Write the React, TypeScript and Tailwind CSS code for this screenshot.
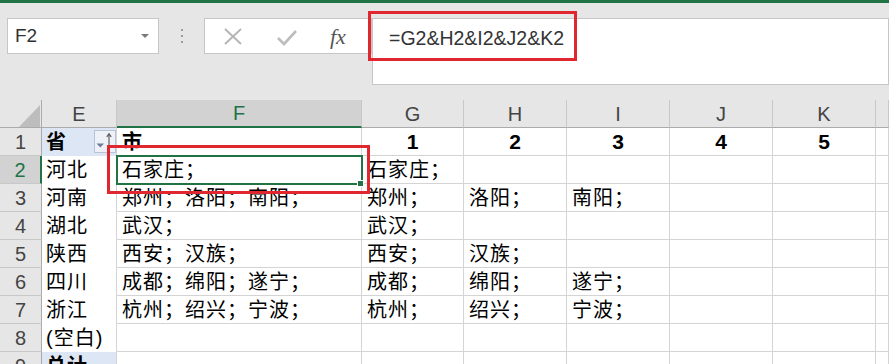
import React from 'react';

const cjk = { fontFamily: '"Liberation Sans", "Noto Sans CJK SC", sans-serif' };

const rows: string[][] = [
  ['河北', '石家庄；', '石家庄；', '', '', '', ''],
  ['河南', '郑州；洛阳；南阳；', '郑州；', '洛阳；', '南阳；', '', ''],
  ['湖北', '武汉；', '武汉；', '', '', '', ''],
  ['陕西', '西安；汉族；', '西安；', '汉族；', '', '', ''],
  ['四川', '成都；绵阳；遂宁；', '成都；', '绵阳；', '遂宁；', '', ''],
  ['浙江', '杭州；绍兴；宁波；', '杭州；', '绍兴；', '宁波；', '', ''],
  ['(空白)', '', '', '', '', '', ''],
];

function FilterButton() {
  return (
    <div className="absolute right-0 top-[2px] h-[23px] w-[22px] border border-[#b8c3d3] bg-[#eef2f8]">
      <svg width="22" height="23" viewBox="0 0 22 23" className="absolute -left-[1px] -top-[1px]">
        <path d="M2.5 13.5 L10 13.5 L6.25 17.5 Z" fill="#6b7f99" />
        <path d="M15 4 L15 19" stroke="#555" strokeWidth="1.1" />
        <path d="M12.8 6.8 L15 3.8 L17.2 6.8" stroke="#555" strokeWidth="1.1" fill="none" />
      </svg>
    </div>
  );
}

export default function App() {
  const colLetters = ['E', 'F', 'G', 'H', 'I', 'J', 'K', ''];
  return (
    <div className="relative h-[364px] w-[889px] overflow-hidden bg-[#e6e6e6]" style={cjk}>
      <div className="h-[3px] bg-[#217346]" />

      {/* formula bar */}
      <div className="flex h-[97px] items-start pt-[15px]">
        <div className="ml-[7px] flex h-[36px] w-[152px] items-center justify-between border border-[#c6c6c6] bg-white pl-[7px] pr-[9px]">
          <span className="text-[19px] text-[#333]">F2</span>
          <svg width="8" height="5" viewBox="0 0 8 5">
            <path d="M0 0 L8 0 L4 4 Z" fill="#7a7a7a" />
          </svg>
        </div>
        <div className="flex h-[36px] w-[45px] flex-col items-center justify-center gap-[4px]">
          <div className="h-[2px] w-[2px] bg-[#9a9a9a]" />
          <div className="h-[2px] w-[2px] bg-[#9a9a9a]" />
          <div className="h-[2px] w-[2px] bg-[#9a9a9a]" />
        </div>
        <div className="flex h-[36px] w-[168px] items-center border border-[#c6c6c6] bg-white">
          <svg width="18" height="17" viewBox="0 0 18 17" className="ml-[19px]">
            <path d="M1 1 L17 16 M17 1 L1 16" stroke="#b3b3b3" strokeWidth="1.8" />
          </svg>
          <svg width="20" height="16" viewBox="0 0 20 16" className="ml-[35px] mt-[4px]">
            <path d="M1 8 L7 14 L19 1" stroke="#bdbdbd" strokeWidth="2.6" fill="none" />
          </svg>
          <span className="ml-[33px] text-[22px] italic text-[#555]" style={{ fontFamily: '"Liberation Serif", serif' }}>
            fx
          </span>
        </div>
        <div className="h-[67px] flex-1 border border-[#c6c6c6] bg-white pl-[16px] pt-[5px]">
          <span className="text-[19.5px] text-[#333]">=G2&amp;H2&amp;I2&amp;J2&amp;K2</span>
        </div>
      </div>

      {/* grid */}
      <div className="relative grid grid-cols-[42px_75px_245px_102px_103px_103px_103px_103px_1fr] auto-rows-[28px] text-[20px] text-black">
        {/* header row */}
        <div className="relative border-b border-r border-[#ababab] bg-[#e6e6e6]">
          <svg width="21" height="22" viewBox="0 0 21 22" className="absolute left-[19px] top-[5px]">
            <path d="M21 0 L21 22 L0 22 Z" fill="#bdbdbd" />
          </svg>
        </div>
        {colLetters.map((c, i) => (
          <div
            key={i}
            className={
              c === 'F'
                ? 'flex items-center justify-center border-b-2 border-r border-b-[#217346] border-r-[#c8c8c8] bg-[#d2d2d2] text-[#217346]'
                : 'flex items-center justify-center border-b border-r border-b-[#ababab] border-r-[#c8c8c8] bg-[#e6e6e6] text-[#444]'
            }
          >
            {c}
          </div>
        ))}

        {/* row 1 */}
        <div className="flex items-center justify-center border-b border-r border-b-[#c8c8c8] border-r-[#ababab] bg-[#e6e6e6] text-[#444]">1</div>
        <div className="relative flex items-center border-r border-[#d4d4d4] bg-[#dce6f4] pl-[4px] font-bold">
          省
          <FilterButton />
        </div>
        <div className="flex items-center border-b border-r border-[#d4d4d4] bg-white pl-[5px] font-bold">市</div>
        {['1', '2', '3', '4', '5', ''].map((n, i) => (
          <div key={i} className="flex items-center justify-center border-b border-r border-[#d4d4d4] bg-white text-[21px] font-bold">
            {n}
          </div>
        ))}

        {/* rows 2-8 */}
        {rows.map((r, ri) => (
          <React.Fragment key={ri}>
            <div
              className={
                ri === 0
                  ? 'flex items-center justify-center border-b border-r-2 border-b-[#c8c8c8] border-r-[#217346] bg-[#d2d2d2] text-[#217346]'
                  : 'flex items-center justify-center border-b border-r border-b-[#c8c8c8] border-r-[#ababab] bg-[#e6e6e6] text-[#444]'
              }
            >
              {ri + 2}
            </div>
            <div className="flex items-center border-r border-[#d4d4d4] bg-white pl-[4px] tracking-[1px]">{r[0]}</div>
            {r.slice(1).map((t, ci) => (
              <div key={ci} className="relative flex items-center whitespace-nowrap border-b border-r border-[#d4d4d4] bg-white pl-[5px] tracking-[1px]">
                {t}
                {ri === 0 && ci === 0 && (
                  <>
                    <div className="absolute -left-[1px] -top-[1px] z-10 h-[30px] w-[247px] border-2 border-[#217346]" />
                    <div className="absolute left-[240px] top-[24px] z-10 h-[7px] w-[7px] border border-white bg-[#217346]" />
                  </>
                )}
              </div>
            ))}
            <div className="border-b border-r border-[#d4d4d4] bg-white" />
          </React.Fragment>
        ))}

        {/* row 9 */}
        <div className="flex items-center justify-center border-r border-[#ababab] bg-[#e6e6e6] text-[#444]">9</div>
        <div className="flex items-center border-r border-[#d4d4d4] bg-[#dce6f4] pl-[4px] font-bold tracking-[1px]">总计</div>
        {[0, 1, 2, 3, 4, 5, 6].map((i) => (
          <div key={i} className="border-r border-[#d4d4d4] bg-white" />
        ))}

        <div className="absolute left-[107px] top-[45px] z-20 h-[49px] w-[263px] border-[3px] border-[#e0262e]" />
      </div>

      <div className="absolute left-[368px] top-[11px] h-[50px] w-[209px] border-[3px] border-[#e0262e]" />
    </div>
  );
}
